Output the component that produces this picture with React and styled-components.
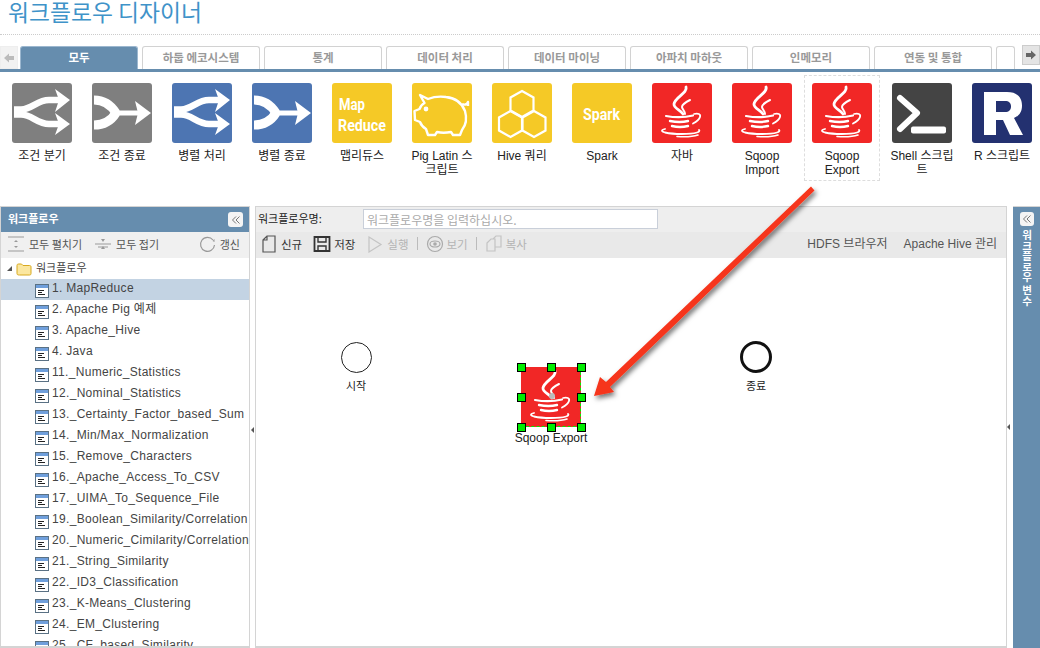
import React from "react";
import styled, { createGlobalStyle } from "styled-components";

const GlobalStyle = createGlobalStyle`
  html, body {
    margin: 0;
    padding: 0;
    background: #fff;
    overflow: hidden;
  }
  body {
    font-family: "Liberation Sans", "Noto Sans CJK KR", sans-serif;
    font-size: 12px;
    color: #222;
  }
`;

const TABS = ["모두", "하둡 에코시스템", "통계", "데이터 처리", "데이터 마이닝", "아파치 마하웃", "인메모리", "연동 및 통합", ""];

const TOOLS = [
  { label: "조건 분기", kind: "split", bg: "#7f7f7f" },
  { label: "조건 종료", kind: "join", bg: "#7f7f7f" },
  { label: "병렬 처리", kind: "split", bg: "#4d75b2" },
  { label: "병렬 종료", kind: "join", bg: "#4d75b2" },
  { label: "맵리듀스", kind: "mapreduce", bg: "#f5c926" },
  { label: "Pig Latin 스크립트", kind: "pig", bg: "#f5c926" },
  { label: "Hive 쿼리", kind: "hive", bg: "#f5c926" },
  { label: "Spark", kind: "spark", bg: "#f5c926" },
  { label: "자바", kind: "java", bg: "#f12726" },
  { label: "Sqoop Import", kind: "java", bg: "#f12726" },
  { label: "Sqoop Export", kind: "java", bg: "#f12726", picked: true },
  { label: "Shell 스크립트", kind: "shell", bg: "#444444" },
  { label: "R 스크립트", kind: "r", bg: "#233170" },
];

const WORKFLOWS = [
  "1. MapReduce",
  "2. Apache Pig 예제",
  "3. Apache_Hive",
  "4. Java",
  "11._Numeric_Statistics",
  "12._Nominal_Statistics",
  "13._Certainty_Factor_based_Sum",
  "14._Min/Max_Normalization",
  "15._Remove_Characters",
  "16._Apache_Access_To_CSV",
  "17._UIMA_To_Sequence_File",
  "19._Boolean_Similarity/Correlation",
  "20._Numeric_Cimilarity/Correlation",
  "21._String_Similarity",
  "22._ID3_Classification",
  "23._K-Means_Clustering",
  "24._EM_Clustering",
  "25._CF_based_Similarity",
];

function JavaGlyph() {
  return (
    <g fill="none" stroke="#fff" strokeLinecap="round">
      <path d="M34 4c2 6-11 10-12 17-.5 4 6 6 9 10" strokeWidth="2.800" />
      <path d="M38 17c-4 2-8 4-8 7 0 2 3 4 3 7" strokeWidth="2" />
      <path d="M14 33c8 1.500 19 1.500 27-.5" strokeWidth="2.200" />
      <path d="M42 31c4-1 7 0 6 3-1 3-4 5-7 6.500" strokeWidth="1.800" />
      <path d="M18 38c6 1.200 13 1.200 18 0" strokeWidth="2.400" />
      <path d="M20 43c5 1.200 11 1.200 16 0" strokeWidth="2.400" />
      <path d="M13 46c-4 1-4 2.500 0 3.500 9 2 25 2 32 0 2-.5 3-1.500 2-2.500" strokeWidth="1.800" />
      <path d="M25 53.500c7 .5 15 .5 21-1.500" strokeWidth="1.600" />
    </g>
  );
}

function ToolGlyph({ kind }) {
  if (kind === "java") return <JavaGlyph />;
  if (kind === "split") {
    return (
      <g>
        <g fill="none" stroke="#fff" strokeWidth="6.500">
          <path d="M2 26.500H9C20 26.500 25 17 37 17H47" />
          <path d="M2 31.500H9C20 31.500 25 41 37 41H47" />
        </g>
        <path d="M43 6L58 17 43 29 47 17zM43 30L58 41 43 52 47 41z" fill="#fff" />
      </g>
    );
  }
  if (kind === "join") {
    return (
      <g>
        <g fill="none" stroke="#fff">
          <path d="M2 17C12 17 19 22 24 30" strokeWidth="9" />
          <path d="M2 42C12 42 19 38 24 30" strokeWidth="9" />
          <path d="M22 30H48" strokeWidth="5" />
        </g>
        <path d="M43 18L59 30 43 42 46 30z" fill="#fff" />
      </g>
    );
  }
  if (kind === "mapreduce") {
    return (
      <g fill="#fff" fontFamily="Roboto, 'Liberation Sans', sans-serif" fontWeight="700">
        <text x="7" y="27" fontSize="16" textLength="26" lengthAdjust="spacingAndGlyphs">Map</text>
        <text x="6" y="48" fontSize="16" textLength="48" lengthAdjust="spacingAndGlyphs">Reduce</text>
      </g>
    );
  }
  if (kind === "spark") {
    return (
      <text x="11" y="37" fill="#fff" fontFamily="Roboto, 'Liberation Sans', sans-serif" fontWeight="700" fontSize="16" textLength="37" lengthAdjust="spacingAndGlyphs">Spark</text>
    );
  }
  if (kind === "pig") {
    return (
      <g fill="none" stroke="#fff" strokeWidth="2.400" strokeLinejoin="round">
        <path d="M8 12l8 4c5-2 11-3 18-2 9 1 16 6 19 14 2 7 1 14-3 19l-2 5h-7l-2-3c-5 1-10 1-14 0l-2 3h-7l-2-6c-3-2-5-4-6-7l-5-2-.5-9 5-2c1-3 3-5 5-6z" />
        <path d="M50 21c2 1 5 1 6-2v4" />
        <circle cx="14" cy="26" r="1.200" fill="#fff" />
      </g>
    );
  }
  if (kind === "hive") {
    return (
      <g fill="none" stroke="#fff" strokeWidth="2.200">
        <path d="M30 8l11.500 6.500v13L30 34l-11.500-6.500v-13z" />
        <path d="M18.500 28l11.500 6.500v13L18.500 54 7 47.500v-13z" />
        <path d="M42 28l11.500 6.500v13L42 54l-11.500-6.500v-13z" />
      </g>
    );
  }
  if (kind === "shell") {
    return (
      <g>
        <path d="M8 15l17 15L8 46" fill="none" stroke="#fff" strokeWidth="6" strokeLinecap="round" strokeLinejoin="round" />
        <rect x="19" y="43.500" width="35" height="7" rx="2" fill="#fff" />
      </g>
    );
  }
  return (
    <path fillRule="evenodd" fill="#fff" d="M12 9h23c10 0 15 5 15 14 0 6-3 10-8 12l9 17H38l-7-15h-7v15H12zM24 18v11h9c4 0 6-2 6-5.500S37 18 33 18z" />
  );
}

function ToolIcon({ kind, bg }) {
  return (
    <IconTile $bg={bg}>
      <svg width="60" height="60" viewBox="0 0 60 60">
        <ToolGlyph kind={kind} />
      </svg>
    </IconTile>
  );
}

function DocIcon() {
  return (
    <svg width="14" height="14" viewBox="0 0 14 14">
      <rect x=".5" y=".5" width="13" height="13" fill="#fff" stroke="#5a7184" />
      <rect x="1" y="1" width="12" height="3" fill="#6f9fdc" />
      <path d="M3 6.500h6M3 8.500h4M3 10.500h7" stroke="#222" strokeWidth="1" />
    </svg>
  );
}

function Collapse({ small }) {
  return (
    <CollapseButton $small={small}>
      <svg width="10" height="10" viewBox="0 0 10 10" fill="none" stroke="#777" strokeWidth="1">
        <path d="M5 1.500L1.500 5 5 8.500M8.500 1.500L5 5l3.500 3.500" />
      </svg>
    </CollapseButton>
  );
}

function BarIcon({ children, muted }) {
  return (
    <svg width="18" height="18" viewBox="0 0 18 18" fill="none" stroke={muted ? "#c4c4c4" : "#555"} strokeWidth="1.200">
      {children}
    </svg>
  );
}

export default function App() {
  return (
    <Page>
      <GlobalStyle />
      <Title>워크플로우 디자이너</Title>
      <TabBar>
        <ScrollButton>
          <svg width="10" height="10" viewBox="0 0 10 10"><path d="M0 5l5-4.500V3h5v4H5v2.500z" fill="#bbb" /></svg>
        </ScrollButton>
        <TabList>
          {TABS.map((tab, i) => (
            <Tab key={i} $active={i === 0}>{tab}</Tab>
          ))}
        </TabList>
        <ScrollButton $right>
          <svg width="10" height="10" viewBox="0 0 10 10"><path d="M10 5L5 .5V3H0v4h5v2.500z" fill="#666" /></svg>
        </ScrollButton>
      </TabBar>

      <Palette>
        {TOOLS.map((tool) => (
          <Tool key={tool.label} $picked={tool.picked}>
            <ToolIcon kind={tool.kind} bg={tool.bg} />
            <ToolLabel>{tool.label}</ToolLabel>
          </Tool>
        ))}
      </Palette>

      <Workspace>
        <Sidebar>
          <PanelHead>
            <PanelTitle>워크플로우</PanelTitle>
            <Collapse />
          </PanelHead>
          <TreeBar>
            <TreeAction>
              <BarIcon>
                <path d="M1 2h16M1 16h16" stroke="#999" />
                <path d="M9 5l-2 2h4zM9 13l-2-2h4z" fill="#999" stroke="none" />
              </BarIcon>
              모두 펼치기
            </TreeAction>
            <TreeAction>
              <BarIcon>
                <path d="M1 9h16M4 12h10" stroke="#999" />
                <path d="M9 7L7 4h4zM9 11l-2 3h4z" fill="#999" stroke="none" />
              </BarIcon>
              모두 접기
            </TreeAction>
            <TreeAction $push>
              <BarIcon>
                <path d="M15 5a7 7 0 1 0 1.500 5" stroke="#999" />
                <path d="M16.500 7l-2-1 2-2z" fill="#999" stroke="none" />
              </BarIcon>
              갱신
            </TreeAction>
          </TreeBar>
          <Tree>
            <RootRow>
              <Caret />
              <svg width="16" height="14" viewBox="0 0 16 14">
                <path d="M1 3.500C1 2.500 1.500 2 2.500 2h3l1.500 1.500h6.500c1 0 1.500.5 1.500 1.500v6.500c0 1-.5 1.500-1.500 1.500h-10C1.500 13 1 12.500 1 11.500z" fill="#fbe7a0" stroke="#d8a91f" />
              </svg>
              <RootName>워크플로우</RootName>
            </RootRow>
            {WORKFLOWS.map((name, i) => (
              <TreeRow key={name} $active={i === 0}>
                <DocIcon />
                <span>{name}</span>
              </TreeRow>
            ))}
          </Tree>
        </Sidebar>

        <Splitter><SplitGrip /></Splitter>

        <Designer>
          <NameBar>
            <NameLabel>워크플로우명:</NameLabel>
            <NameInput readOnly placeholder="워크플로우명을 입력하십시오." />
          </NameBar>
          <ActionBar>
            <Action>
              <BarIcon>
                <path d="M3 5l4-4h8v16H3zM3 5h4V1" />
              </BarIcon>
              신규
            </Action>
            <Action>
              <BarIcon>
                <path d="M1.500 2h15v14h-15z" strokeWidth="1.800" stroke="#333" />
                <path d="M5 2v5h8V2M5 16v-5h8v5" stroke="#333" strokeWidth="1.400" />
              </BarIcon>
              저장
            </Action>
            <Action $off>
              <BarIcon muted>
                <path d="M3 2l12 7.500L3 17z" />
              </BarIcon>
              실행
            </Action>
            <Divider />
            <Action $off>
              <BarIcon muted>
                <circle cx="9" cy="9" r="7.500" stroke="#aaa" />
                <ellipse cx="9" cy="9" rx="5" ry="3" stroke="#aaa" />
                <circle cx="9" cy="9" r="1.800" fill="#aaa" stroke="none" />
              </BarIcon>
              보기
            </Action>
            <Divider />
            <Action $off>
              <BarIcon muted>
                <path d="M2 8l4-4h4v12H2zM8 4l3-3h5v11h-6" />
              </BarIcon>
              복사
            </Action>
            <ActionLinks>
              <span>HDFS 브라우저</span>
              <span>Apache Hive 관리</span>
            </ActionLinks>
          </ActionBar>
          <Canvas>
            <StartNode>
              <Circle />
              <NodeLabel>시작</NodeLabel>
            </StartNode>
            <EndNode>
              <Circle $thick />
              <NodeLabel>종료</NodeLabel>
            </EndNode>
            <PickedNode>
              <PickedBox>
                <svg width="60" height="60" viewBox="0 0 60 60"><JavaGlyph /></svg>
                <CenterDot />
                {[[0, 0], [1, 0], [2, 0], [0, 1], [2, 1], [0, 2], [1, 2], [2, 2]].map(([col, row]) => (
                  <GreenHandle key={`${col}-${row}`} $col={col} $row={row} />
                ))}
              </PickedBox>
              <NodeLabel $big>Sqoop Export</NodeLabel>
            </PickedNode>
          </Canvas>
          <RightGrip />
        </Designer>

        <VarsPanel>
          <Collapse small />
          <VarsLabel>워크플로우 변수</VarsLabel>
        </VarsPanel>
      </Workspace>

      <CalloutArrow width="1040" height="648" viewBox="0 0 1040 648">
        <defs>
          <filter id="arrow-shadow" x="-20%" y="-20%" width="140%" height="140%">
            <feDropShadow dx="2" dy="3" stdDeviation="2.500" floodColor="#000" floodOpacity=".55" />
          </filter>
        </defs>
        <path d="M811 186.500L814.500 190.500 610 387 614 392 594 396 600 377 606 382Z" fill="#f6341a" filter="url(#arrow-shadow)" />
      </CalloutArrow>
    </Page>
  );
}

const Page = styled.div`
  position: relative;
  width: 1040px;
  height: 648px;
  overflow: hidden;
  display: flex;
  flex-direction: column;
`;

const Title = styled.h1`
  margin: 0;
  height: 35px;
  flex: 0 0 35px;
  padding-left: 8px;
  box-sizing: border-box;
  border-bottom: 1px dotted #ccc;
  font: 400 22.800px/24px "Noto Sans CJK KR", sans-serif;
  color: #3f93c9;
`;

const TabBar = styled.div`
  display: flex;
  align-items: flex-end;
  height: 34px;
  flex: 0 0 34px;
  border-bottom: 3px solid #668dae;
  position: relative;
`;

const TabList = styled.div`
  display: flex;
  gap: 4px;
  margin-left: 2px;
  flex: 1;
  overflow: hidden;
  height: 23px;
`;

const Tab = styled.div`
  flex: 0 0 auto;
  width: 118px;
  &:last-child { width: 19px; }
  height: 23px;
  box-sizing: border-box;
  border: 1px solid ${(p) => (p.$active ? "#9cb7cf" : "#d2d2d2")};
  border-bottom: none;
  border-radius: 3px 3px 0 0;
  background: ${(p) => (p.$active ? "#668dae" : "#fff")};
  color: ${(p) => (p.$active ? "#fff" : "#999")};
  font: 700 11.500px/21px "Noto Sans CJK KR", sans-serif;
  text-align: center;
`;

const ScrollButton = styled.div`
  flex: 0 0 18px;
  width: 18px;
  height: ${(p) => (p.$right ? "20px" : "23px")};
  margin-bottom: ${(p) => (p.$right ? "4px" : "0")};
  background: ${(p) => (p.$right ? "#e4e4e4" : "#f2f2f2")};
  border: 1px solid ${(p) => (p.$right ? "#ccc" : "#eee")};
  box-sizing: border-box;
  display: flex;
  align-items: center;
  justify-content: center;
`;

const Palette = styled.div`
  display: flex;
  height: 134px;
  padding-left: 2px;
  padding-top: 11px;
  box-sizing: border-box;
  flex: 0 0 auto;
`;

const Tool = styled.div`
  position: relative;
  flex: 0 0 80px;
  width: 80px;
  display: flex;
  flex-direction: column;
  align-items: center;
  &::before {
    content: "";
    display: ${(p) => (p.$picked ? "block" : "none")};
    position: absolute;
    left: 2px;
    top: -8px;
    width: 76px;
    height: 106px;
    box-sizing: border-box;
    border: 1px dashed #ddd;
  }
`;

const IconTile = styled.div`
  width: 60px;
  height: 60px;
  border-radius: 3px;
  background: ${(p) => p.$bg};
  overflow: hidden;
  svg { display: block; }
`;

const ToolLabel = styled.div`
  width: 64px;
  margin-top: 6px;
  font: 400 12px/14px "Liberation Sans", "Noto Sans CJK KR", sans-serif;
  color: #222;
  text-align: center;
`;

const Workspace = styled.div`
  display: flex;
  flex: 1;
  min-height: 0;
`;

const Sidebar = styled.div`
  width: 250px;
  flex: 0 0 250px;
  box-sizing: border-box;
  border: 1px solid #d4d4d4;
  border-bottom-width: 2px;
  display: flex;
  flex-direction: column;
  overflow: hidden;
`;

const PanelHead = styled.div`
  height: 25px;
  flex: 0 0 25px;
  background: #668dae;
  padding: 0 6px 0 7px;
  display: flex;
  justify-content: space-between;
  align-items: center;
`;

const PanelTitle = styled.span`
  margin-top: -4px;
  color: #fff;
  font: 700 11px/14px "Noto Sans CJK KR", sans-serif;
`;

const CollapseButton = styled.span`
  width: ${(p) => (p.$small ? "14px" : "15px")};
  height: ${(p) => (p.$small ? "14px" : "15px")};
  flex: 0 0 auto;
  background: #f4f4f4;
  border-radius: 3px;
  display: flex;
  align-items: center;
  justify-content: center;
`;

const TreeBar = styled.div`
  display: flex;
  height: 26px;
  flex: 0 0 26px;
  box-sizing: border-box;
  gap: 12px;
  align-items: center;
  background: #f0f0f0;
  padding: 0 9px 3px 6px;
  font: 400 11px/14px "Noto Sans CJK KR", sans-serif;
  color: #555;
`;

const TreeAction = styled.span`
  display: flex;
  align-items: center;
  gap: 4px;
  margin-left: ${(p) => (p.$push ? "auto" : "0")};
`;

const Tree = styled.div`
  flex: 1;
  overflow: hidden;
  background: #fff;
`;

const RootRow = styled.div`
  height: 21px;
  display: flex;
  align-items: center;
  gap: 4px;
  padding-left: 6px;
`;

const RootName = styled.span`
  margin-top: -3px;
  font: 400 11px/14px "Noto Sans CJK KR", sans-serif;
  color: #444;
`;

const Caret = styled.i`
  width: 0;
  height: 0;
  border-style: solid;
  border-width: 0 0 5px 5px;
  border-color: transparent transparent #555 transparent;
`;

const TreeRow = styled.div`
  height: 21px;
  display: flex;
  align-items: center;
  gap: 3px;
  padding-left: 34px;
  background: ${(p) => (p.$active ? "#c3d3e3" : "transparent")};
  font: 400 12px/14px "Liberation Sans", "Noto Sans CJK KR", sans-serif;
  letter-spacing: 0.32px;
  color: #444;
  white-space: nowrap;
  svg { flex: 0 0 auto; margin-top: 2px; }
  span { margin-top: -3px; }
`;

const Splitter = styled.div`
  width: 5px;
  flex: 0 0 5px;
  display: flex;
  align-items: center;
`;

const SplitGrip = styled.i`
  width: 0;
  height: 0;
  margin: 5px 0 0 1px;
  border-style: solid;
  border-width: 3px 3px 3px 0;
  border-color: transparent #555 transparent transparent;
`;

const Designer = styled.div`
  position: relative;
  width: 752px;
  flex: 0 0 752px;
  box-sizing: border-box;
  border: 1px solid #d4d4d4;
  border-bottom-width: 2px;
  display: flex;
  flex-direction: column;
`;

const NameBar = styled.div`
  height: 25px;
  flex: 0 0 25px;
  display: flex;
  align-items: center;
  background: #eeeeee;
  padding-left: 2px;
`;

const NameLabel = styled.label`
  width: 105px;
  margin-top: -3px;
  font: 400 11px/14px "Noto Sans CJK KR", sans-serif;
  color: #222;
`;

const NameInput = styled.input`
  width: 295px;
  height: 20px;
  margin-top: -1px;
  box-sizing: border-box;
  border: 1px solid #c9cfd9;
  background: #fff;
  padding: 0 3px;
  font: 400 12px "Noto Sans CJK KR", sans-serif;
  &::placeholder { color: #aaa; }
`;

const ActionBar = styled.div`
  height: 26px;
  flex: 0 0 26px;
  box-sizing: border-box;
  display: flex;
  align-items: center;
  gap: 11px;
  background: #e9e9e9;
  padding: 0 0 3px 4px;
  font: 400 11.500px/14px "Noto Sans CJK KR", sans-serif;
`;

const Action = styled.span`
  display: flex;
  align-items: center;
  gap: 3px;
  color: ${(p) => (p.$off ? "#b4b4b4" : "#333")};
`;

const Divider = styled.i`
  width: 1px;
  height: 13px;
  margin: 0 -3px;
  background: #bbb;
`;

const ActionLinks = styled.span`
  margin-left: auto;
  display: flex;
  gap: 16px;
  padding-right: 9px;
  color: #555;
  font: 400 12px/14px "Liberation Sans", "Noto Sans CJK KR", sans-serif;
`;

const Canvas = styled.div`
  position: relative;
  flex: 1;
  background: #fff;
`;

const RightGrip = styled.i`
  position: absolute;
  right: -4px;
  top: 217px;
  width: 0;
  height: 0;
  border-style: solid;
  border-width: 3px 3px 3px 0;
  border-color: transparent #555 transparent transparent;
`;

const CanvasNode = styled.div`
  position: absolute;
  display: flex;
  flex-direction: column;
  align-items: center;
`;

const StartNode = styled(CanvasNode)`
  left: 70px;
  top: 84px;
  width: 60px;
`;

const EndNode = styled(CanvasNode)`
  left: 470px;
  top: 83px;
  width: 60px;
`;

const PickedNode = styled(CanvasNode)`
  left: 250px;
  top: 109px;
  width: 90px;
`;

const Circle = styled.div`
  width: ${(p) => (p.$thick ? "32px" : "31px")};
  height: ${(p) => (p.$thick ? "32px" : "31px")};
  box-sizing: border-box;
  border-radius: 50%;
  background: #fff;
  border: ${(p) => (p.$thick ? "3px solid #111" : "1px solid #222")};
`;

const NodeLabel = styled.div`
  margin-top: 6px;
  font: 400 ${(p) => (p.$big ? "12px" : "11px")}/14px "Liberation Sans", "Noto Sans CJK KR", sans-serif;
  color: #222;
  white-space: nowrap;
`;

const PickedBox = styled.div`
  position: relative;
  width: 60px;
  height: 60px;
  background: #f12726;
  margin-bottom: -2px;
  svg { display: block; }
  &::after {
    content: "";
    position: absolute;
    inset: 0;
    border-right: 1px dashed #00ee00;
    border-bottom: 1px dashed #00ee00;
  }
`;

const CenterDot = styled.i`
  position: absolute;
  left: 28px;
  top: 26px;
  width: 6px;
  height: 6px;
  border-radius: 50%;
  background: #bbb;
`;

const GreenHandle = styled.i`
  position: absolute;
  z-index: 1;
  left: ${(p) => -4 + p.$col * 30}px;
  top: ${(p) => -4 + p.$row * 30}px;
  width: 7px;
  height: 7px;
  background: #00ee00;
  border: 1px solid #000;
`;

const VarsPanel = styled.div`
  width: 27px;
  margin-left: 6px;
  background: #668dae;
  border-top: 1px solid #d4d4d4;
  display: flex;
  flex-direction: column;
  align-items: center;
  padding-top: 5px;
  gap: 4px;
`;

const VarsLabel = styled.div`
  writing-mode: vertical-rl;
  font: 700 10.500px/14px "Noto Sans CJK KR", sans-serif;
  color: #fff;
`;

const CalloutArrow = styled.svg`
  position: absolute;
  left: 0;
  top: 0;
  pointer-events: none;
`;
